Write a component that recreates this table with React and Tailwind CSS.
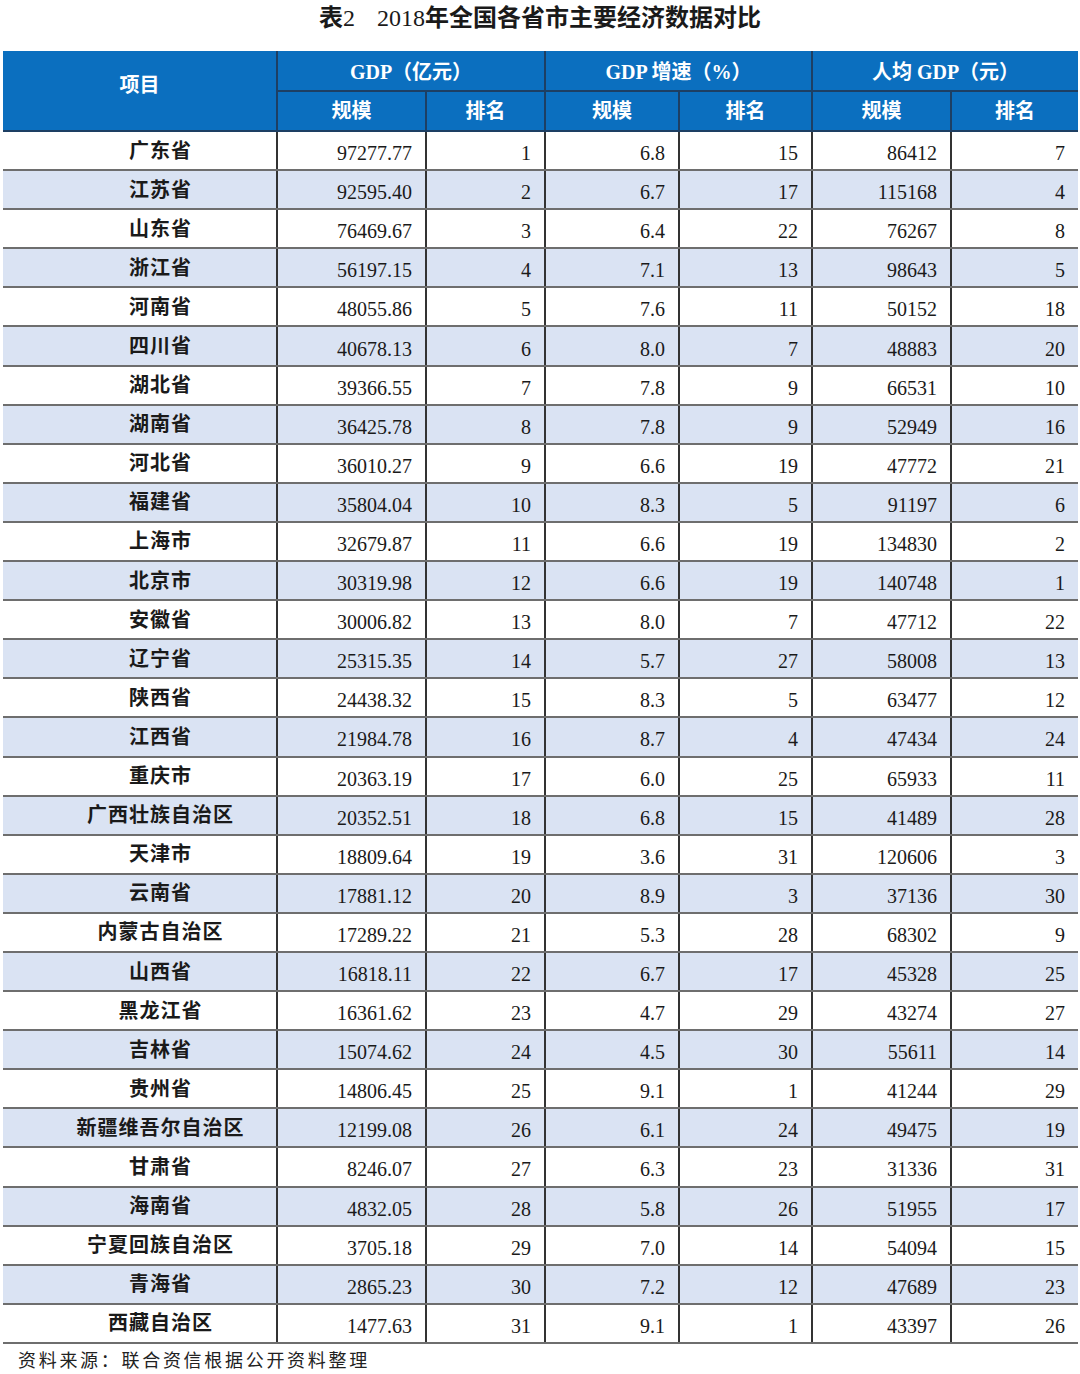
import React from 'react';

const rows = [
  ['广东省', '97277.77', 1, '6.8', 15, '86412', 7],
  ['江苏省', '92595.40', 2, '6.7', 17, '115168', 4],
  ['山东省', '76469.67', 3, '6.4', 22, '76267', 8],
  ['浙江省', '56197.15', 4, '7.1', 13, '98643', 5],
  ['河南省', '48055.86', 5, '7.6', 11, '50152', 18],
  ['四川省', '40678.13', 6, '8.0', 7, '48883', 20],
  ['湖北省', '39366.55', 7, '7.8', 9, '66531', 10],
  ['湖南省', '36425.78', 8, '7.8', 9, '52949', 16],
  ['河北省', '36010.27', 9, '6.6', 19, '47772', 21],
  ['福建省', '35804.04', 10, '8.3', 5, '91197', 6],
  ['上海市', '32679.87', 11, '6.6', 19, '134830', 2],
  ['北京市', '30319.98', 12, '6.6', 19, '140748', 1],
  ['安徽省', '30006.82', 13, '8.0', 7, '47712', 22],
  ['辽宁省', '25315.35', 14, '5.7', 27, '58008', 13],
  ['陕西省', '24438.32', 15, '8.3', 5, '63477', 12],
  ['江西省', '21984.78', 16, '8.7', 4, '47434', 24],
  ['重庆市', '20363.19', 17, '6.0', 25, '65933', 11],
  ['广西壮族自治区', '20352.51', 18, '6.8', 15, '41489', 28],
  ['天津市', '18809.64', 19, '3.6', 31, '120606', 3],
  ['云南省', '17881.12', 20, '8.9', 3, '37136', 30],
  ['内蒙古自治区', '17289.22', 21, '5.3', 28, '68302', 9],
  ['山西省', '16818.11', 22, '6.7', 17, '45328', 25],
  ['黑龙江省', '16361.62', 23, '4.7', 29, '43274', 27],
  ['吉林省', '15074.62', 24, '4.5', 30, '55611', 14],
  ['贵州省', '14806.45', 25, '9.1', 1, '41244', 29],
  ['新疆维吾尔自治区', '12199.08', 26, '6.1', 24, '49475', 19],
  ['甘肃省', '8246.07', 27, '6.3', 23, '31336', 31],
  ['海南省', '4832.05', 28, '5.8', 26, '51955', 17],
  ['宁夏回族自治区', '3705.18', 29, '7.0', 14, '54094', 15],
  ['青海省', '2865.23', 30, '7.2', 12, '47689', 23],
  ['西藏自治区', '1477.63', 31, '9.1', 1, '43397', 26],
];

const serif = "font-['Liberation_Serif','Noto_Sans_CJK_SC',serif]";

export default function App() {
  return (
    <div className={`w-[1080px] h-[1374px] bg-white text-[#1a1a1a] ${serif}`}>
      <div className="h-[51px] pt-[3px] text-center text-[24px] font-bold leading-[30px]">
        表<span className="font-normal">2</span>
        <span className="inline-block w-[22px]"></span>
        <span className="font-normal">2018</span>年全国各省市主要经济数据对比
      </div>

      <table className="ml-[3px] w-[1075px] table-fixed border-collapse">
        <colgroup>
          <col className="w-[274px]" />
          <col className="w-[149px]" />
          <col className="w-[119px]" />
          <col className="w-[134px]" />
          <col className="w-[133px]" />
          <col className="w-[139px]" />
          <col className="w-[127px]" />
        </colgroup>
        <thead className="bg-[#0b6fbf] text-white text-[20px] font-bold">
          <tr className="h-[40px]">
            <th rowSpan={2} className="border-r-2 border-r-[#1d3f63] border-b-2 border-b-[#1d3f63] font-bold pb-[12px]">项目</th>
            <th colSpan={2} className="border-r-2 border-r-[#1d3f63] border-b-2 border-b-[#1d3f63] font-bold pt-[2px]">GDP（亿元）</th>
            <th colSpan={2} className="border-r-2 border-r-[#1d3f63] border-b-2 border-b-[#1d3f63] font-bold pt-[2px]">GDP 增速（%）</th>
            <th colSpan={2} className="border-b-2 border-b-[#1d3f63] font-bold pt-[2px]">人均 GDP（元）</th>
          </tr>
          <tr className="h-[40px]">
            {['规模', '排名', '规模', '排名', '规模', '排名'].map((t, i) => (
              <th
                key={i}
                className={`border-b-2 border-b-[#1d3f63] font-bold ${i < 5 ? 'border-r-2 border-r-[#1d3f63]' : ''}`}
              >
                {t}
              </th>
            ))}
          </tr>
        </thead>
        <tbody className="text-[20px]">
          {rows.map((r, idx) => (
            <tr key={r[0]} className={`h-[39.1px] ${idx % 2 === 1 ? 'bg-[#dae3f3]' : 'bg-white'}`}>
              <td className="border-b-2 border-b-[#6e6e6e] border-r-2 border-r-[#333] text-center font-bold pl-[42px] tracking-[1px]">
                {r[0]}
              </td>
              {r.slice(1).map((v, j) => (
                <td
                  key={j}
                  className={`border-b-2 border-b-[#6e6e6e] text-right pr-[13px] pt-[5px] leading-[24px] ${j < 5 ? 'border-r-2 border-r-[#333]' : ''}`}
                >
                  {v}
                </td>
              ))}
            </tr>
          ))}
        </tbody>
      </table>

      <div className="pl-[18px] pt-[3px] text-[18px] leading-[24px] tracking-[2.7px] text-[#222] font-['Noto_Sans_CJK_SC',sans-serif]">
        资料来源：联合资信根据公开资料整理
      </div>
    </div>
  );
}
